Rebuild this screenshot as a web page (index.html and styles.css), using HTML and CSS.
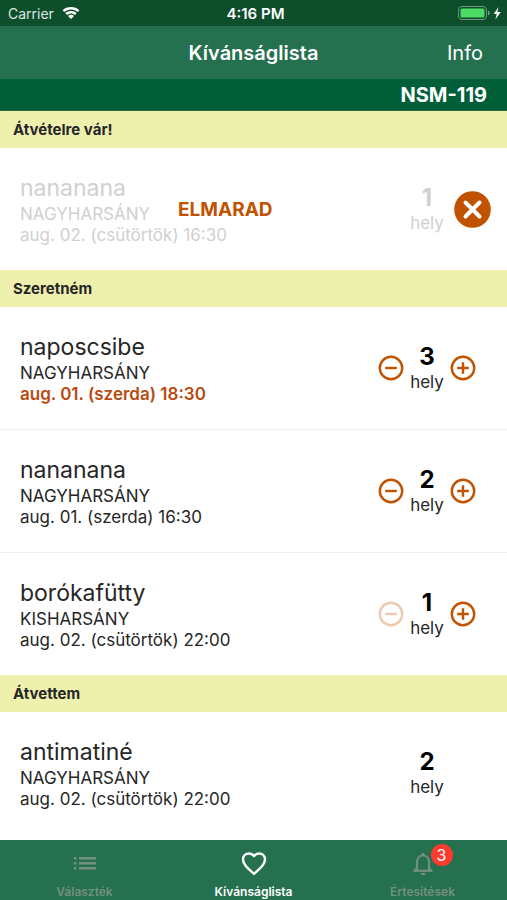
FILE: index.html
```html
<!DOCTYPE html>
<html lang="hu">
<head>
<meta charset="utf-8">
<meta name="viewport" content="width=device-width, initial-scale=1">
<title>Kívánságlista</title>
<link rel="stylesheet" href="styles.css">
</head>
<body>
<svg class="defs" width="0" height="0" aria-hidden="true">
  <symbol id="minus" viewBox="0 0 26 26"><circle cx="13" cy="13" r="11.2"/><path d="M7.2 13h11.6"/></symbol>
  <symbol id="plus" viewBox="0 0 26 26"><circle cx="13" cy="13" r="11.2"/><path d="M7.2 13h11.6M13 7.2v11.6"/></symbol>
</svg>

<div class="status">
  <div class="status-left">
    <span>Carrier</span>
    <svg width="18" height="14" viewBox="0 0 18 14" fill="#fff" aria-hidden="true">
      <path d="M9 1C5.700 1 2.800 2.200.6 4.200l1.700 1.800C4.100 4.400 6.400 3.500 9 3.500s4.900.9 6.700 2.500l1.700-1.800C15.200 2.200 12.300 1 9 1z"/>
      <path d="M9 5C6.800 5 4.800 5.800 3.300 7.100L5 8.900C6.100 8 7.500 7.400 9 7.400S11.900 8 13 8.900l1.700-1.800C13.200 5.800 11.200 5 9 5z"/>
      <path d="M9 8.800c-1.200 0-2.200.4-3 1.100l3 3.100 3-3.100c-.8-.7-1.800-1.100-3-1.100z"/>
    </svg>
  </div>
  <span class="status-time">4:16 PM</span>
  <div class="status-right">
    <svg width="46" height="16" viewBox="0 0 46 16" aria-hidden="true">
      <rect x="1.500" y="1.500" width="28" height="13" rx="3.500" fill="none" stroke="#6d9580"/>
      <rect x="3.500" y="3.500" width="24" height="9" rx="1.500" fill="#4cd964"/>
      <path d="M31 5.500c1.200.4 1.800 1.300 1.800 2.500s-.6 2.100-1.800 2.500z" fill="#6d9580"/>
      <path d="M41.500 2 36.700 9h3l-1.300 5.500 5.400-7.500h-3.400z" fill="#fff"/>
    </svg>
  </div>
</div>

<header class="nav">
  <h1 class="nav-title">Kívánságlista</h1>
  <a class="nav-link" href="#info">Info</a>
</header>
<div class="code">NSM-119</div>

<main class="content">
  <section>
    <h2 class="section-title">Átvételre vár!</h2>
    <ul class="list">
      <li class="item item-cancelled">
        <div class="info">
          <h3 class="name">nananana</h3>
          <p class="detail">NAGYHARSÁNY</p>
          <p class="detail">aug. 02. (csütörtök) 16:30</p>
        </div>
        <strong class="cancelled-label">ELMARAD</strong>
        <div class="stepper">
          <div class="quantity"><span class="count">1</span><span class="unit">hely</span></div>
          <button class="dismiss" type="button" aria-label="Törlés">
            <svg width="37" height="37" viewBox="0 0 37 37" aria-hidden="true">
              <circle cx="18.500" cy="18.500" r="18.300" fill="#c15200"/>
              <path d="M11.500 11.500l14 14M25.500 11.500l-14 14" stroke="#fff" stroke-width="4" stroke-linecap="round" fill="none"/>
            </svg>
          </button>
        </div>
      </li>
    </ul>
  </section>

  <section>
    <h2 class="section-title">Szeretném</h2>
    <ul class="list">
      <li class="item">
        <div class="info">
          <h3 class="name">naposcsibe</h3>
          <p class="detail">NAGYHARSÁNY</p>
          <p class="detail detail-soon">aug. 01. (szerda) 18:30</p>
        </div>
        <div class="stepper">
          <button class="step" type="button" aria-label="Kevesebb"><svg width="26" height="26"><use href="#minus"/></svg></button>
          <div class="quantity"><span class="count">3</span><span class="unit">hely</span></div>
          <button class="step" type="button" aria-label="Több"><svg width="26" height="26"><use href="#plus"/></svg></button>
        </div>
      </li>
      <li class="item">
        <div class="info">
          <h3 class="name">nananana</h3>
          <p class="detail">NAGYHARSÁNY</p>
          <p class="detail">aug. 01. (szerda) 16:30</p>
        </div>
        <div class="stepper">
          <button class="step" type="button" aria-label="Kevesebb"><svg width="26" height="26"><use href="#minus"/></svg></button>
          <div class="quantity"><span class="count">2</span><span class="unit">hely</span></div>
          <button class="step" type="button" aria-label="Több"><svg width="26" height="26"><use href="#plus"/></svg></button>
        </div>
      </li>
      <li class="item">
        <div class="info">
          <h3 class="name">borókafütty</h3>
          <p class="detail">KISHARSÁNY</p>
          <p class="detail">aug. 02. (csütörtök) 22:00</p>
        </div>
        <div class="stepper">
          <button class="step" type="button" aria-label="Kevesebb" disabled><svg width="26" height="26"><use href="#minus"/></svg></button>
          <div class="quantity"><span class="count">1</span><span class="unit">hely</span></div>
          <button class="step" type="button" aria-label="Több"><svg width="26" height="26"><use href="#plus"/></svg></button>
        </div>
      </li>
    </ul>
  </section>

  <section>
    <h2 class="section-title">Átvettem</h2>
    <ul class="list">
      <li class="item item-received">
        <div class="info">
          <h3 class="name">antimatiné</h3>
          <p class="detail">NAGYHARSÁNY</p>
          <p class="detail">aug. 02. (csütörtök) 22:00</p>
        </div>
        <div class="stepper">
          <div class="quantity"><span class="count">2</span><span class="unit">hely</span></div>
        </div>
      </li>
    </ul>
  </section>
</main>

<nav class="tabs">
  <a class="tab" href="#valasztek">
    <span class="tab-icon">
      <svg width="28" height="28" viewBox="0 0 28 28" fill="currentColor" aria-hidden="true">
        <path d="M3 7h2.400v2.400H3zM3 12h2.400v2.400H3zM3 17h2.400v2.400H3zM8 7h17v2.400H8zM8 12h17v2.400H8zM8 17h17v2.400H8z"/>
      </svg>
    </span>
    <span>Választék</span>
  </a>
  <a class="tab tab-active" href="#kivansaglista" aria-current="page">
    <span class="tab-icon">
      <svg width="28" height="28" viewBox="0 0 28 28" fill="none" stroke="currentColor" stroke-width="2.400" stroke-linejoin="round" aria-hidden="true">
        <path d="M14 23.800C6.800 17.500 3 14 3 9.500 3 6 5.600 3.500 8.900 3.500c2 0 3.900 1 5.100 2.600 1.200-1.600 3.100-2.600 5.100-2.600 3.300 0 5.900 2.500 5.900 6 0 4.500-3.800 8-11 14.300z"/>
      </svg>
    </span>
    <span>Kívánságlista</span>
  </a>
  <a class="tab" href="#ertesitesek">
    <span class="tab-icon">
      <svg width="28" height="28" viewBox="0 0 28 28" fill="none" stroke="currentColor" stroke-width="2.200" aria-hidden="true">
        <path d="M8 20.200v-8c0-3.800 2.400-6.700 6-6.700s6 2.900 6 6.700v8"/>
        <path d="M4.500 20.800h19"/>
        <path d="M7.300 17.200 4.500 20.800h3.500zM20.700 17.200l2.800 3.600H20z" fill="currentColor" stroke="none"/>
        <path d="M12.400 5.500V4.400a1.600 1.600 0 0 1 3.200 0v1.100zM11.600 23h4.800a2.400 2.400 0 0 1-4.800 0z" fill="currentColor" stroke="none"/>
      </svg>
      <span class="badge">3</span>
    </span>
    <span>Értesítések</span>
  </a>
</nav>
</body>
</html>
```
FILE: styles.css
```css
* {
  box-sizing: border-box;
}

body {
  margin: 0;
  min-height: 100vh;
  display: flex;
  flex-direction: column;
  background: #fff;
  color: #262626;
  font-family: Inter, "Liberation Sans", sans-serif;
}

h1, h2, h3, p, ul {
  margin: 0;
  padding: 0;
}

button {
  padding: 0;
  border: 0;
  background: none;
}

svg {
  display: block;
}

.defs {
  position: absolute;
}

.status {
  display: grid;
  grid-template-columns: 1fr auto 1fr;
  align-items: center;
  height: 26px;
  padding: 0 4px 0 8px;
  background: #0d4e2b;
  color: #fff;
  font-size: 14px;
}

.status-left {
  display: flex;
  align-items: center;
  gap: 8px;
  color: #dce8e1;
}

.status-time {
  font-size: 15px;
  font-weight: 600;
}

.status-right {
  display: flex;
  justify-content: flex-end;
}

.nav {
  display: grid;
  grid-template-columns: 1fr auto 1fr;
  align-items: center;
  height: 53px;
  padding: 0 24px;
  background: #24704f;
  color: #fff;
}

.nav-title {
  grid-column: 2;
  font-size: 20px;
  font-weight: 600;
}

.nav-link {
  justify-self: end;
  color: #fff;
  font-size: 20px;
  text-decoration: none;
}

.code {
  height: 32px;
  padding: 0 20px;
  border-bottom: 1px solid #2b6a3c;
  background: #005f39;
  color: #fff;
  font-size: 20px;
  font-weight: 700;
  line-height: 32px;
  text-align: right;
}

.content {
  flex: 1;
}

.section-title {
  padding: 0 13px;
  background: #eef0ae;
  font-size: 15px;
  font-weight: 700;
  line-height: 37px;
}

.list {
  list-style: none;
}

.item {
  position: relative;
  display: flex;
  align-items: center;
  justify-content: space-between;
  padding: 24px 31px 24px 20px;
}

.item + .item {
  border-top: 1px solid #efefef;
}

.name {
  font-size: 23px;
  font-weight: 400;
  line-height: 32px;
}

.detail {
  font-size: 17px;
  line-height: 21px;
}

.detail-soon {
  color: #b84a12;
  font-weight: 600;
}

.stepper {
  display: flex;
  align-items: center;
}

.step {
  color: #c15200;
}

.step svg {
  fill: none;
  stroke: currentColor;
  stroke-width: 2.4;
}

.step:disabled {
  opacity: 0.3;
}

.quantity {
  display: flex;
  flex-direction: column;
  width: 46px;
  text-align: center;
}

.count {
  color: #000;
  font-size: 24px;
  font-weight: 700;
  line-height: 28px;
}

.unit {
  font-size: 17px;
  line-height: 22px;
}

.item-received {
  padding-right: 57px;
}

.item-cancelled {
  padding-right: 16px;
}

.item-cancelled .info,
.item-cancelled .count,
.item-cancelled .unit {
  color: #d0d0d0;
}

.item-cancelled .stepper {
  gap: 4px;
}

.cancelled-label {
  position: absolute;
  left: 178px;
  color: #c15200;
  font-size: 19px;
  font-weight: 700;
}

.tabs {
  display: grid;
  grid-template-columns: repeat(3, 1fr);
  height: 60px;
  background: #24704f;
}

.tab {
  display: flex;
  flex-direction: column;
  align-items: center;
  justify-content: flex-end;
  gap: 6px;
  color: #73907f;
  font-size: 12px;
  font-weight: 600;
  line-height: 16px;
  text-decoration: none;
}

.tab-active {
  color: #fff;
}

.tab-icon {
  position: relative;
}

.badge {
  position: absolute;
  top: -6px;
  right: -16px;
  width: 22px;
  height: 22px;
  border-radius: 50%;
  background: #ff3b30;
  color: #fff;
  font-size: 16px;
  font-weight: 400;
  line-height: 22px;
  text-align: center;
}
```
